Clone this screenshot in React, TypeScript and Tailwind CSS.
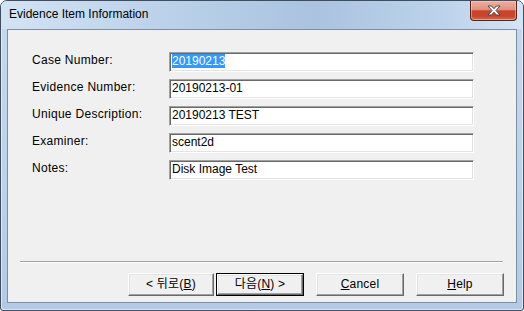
import React from "react";

const rows: { label: string; value: string; selected?: boolean }[] = [
  { label: "Case Number:", value: "20190213", selected: true },
  { label: "Evidence Number:", value: "20190213-01" },
  { label: "Unique Description:", value: "20190213 TEST" },
  { label: "Examiner:", value: "scent2d" },
  { label: "Notes:", value: "Disk Image Test" },
];

function Btn({
  children,
  width,
  isDefault,
}: {
  children: React.ReactNode;
  width: string;
  isDefault?: boolean;
}) {
  const inner = (
    <div className="h-full w-full flex items-center justify-center bg-[#f0f0f0] border border-t-white border-l-white border-r-[#696969] border-b-[#696969] shadow-[inset_-1px_-1px_0_#a0a0a0,inset_1px_1px_0_#e3e3e3] text-[12px] leading-[14px] tracking-[0.2px] text-black pb-[1px]">
      {children}
    </div>
  );
  return isDefault ? (
    <div className={`${width} h-[23px] border border-black`}>{inner}</div>
  ) : (
    <div className={`${width} h-[23px]`}>{inner}</div>
  );
}

export default function App() {
  return (
    <div className="w-[524px] h-[311px] flex flex-col overflow-hidden rounded-t-[7px] rounded-b-[3px] border border-[#3f4d5c] bg-[linear-gradient(to_bottom,#c4d9ef,#bad2eb_60%,#b2cae5)] shadow-[inset_0_0_0_1px_rgba(255,255,255,0.55)] font-['Liberation_Sans','Noto_Sans_CJK_KR',sans-serif]">
      {/* Title bar */}
      <div className="h-[28px] flex items-start bg-[linear-gradient(to_right,#d2e3f4_0%,#bcd2ea_30%,#aac3de_60%,#bdd3eb_85%,#d3e4f5_100%)]">
        <div className="flex-1 pl-[8px] pt-[6px] text-[12px] leading-[15px] text-black">
          Evidence Item Information
        </div>
        <div className="w-[47px] h-[20px] mr-[6px] rounded-b-[4px] border border-t-0 border-[#5e2218] bg-[linear-gradient(to_bottom,#eab0a2_0%,#df927f_45%,#c8452c_52%,#c9442a_80%,#d8704f_100%)] flex items-center justify-center shadow-[inset_0_0_0_1px_rgba(255,220,210,0.45)]">
          <svg width="14" height="11" viewBox="0 0 14 11">
            <polygon
              points="1,1 4.6,1 7,3.8 9.4,1 13,1 9,5.5 13,10 9.4,10 7,7.2 4.6,10 1,10 5,5.5"
              fill="#ffffff"
              stroke="#3d3d3d"
              strokeWidth="0.9"
              strokeLinejoin="round"
            />
          </svg>
        </div>
      </div>

      {/* Client area */}
      <div className="mx-[6px] mb-[7px] flex-1 flex flex-col border border-[#7d8ea2] bg-[#f0f0f0]">
        <div className="pt-[22px] flex flex-col gap-[7px]">
          {rows.map((r) => (
            <div key={r.label} className="flex items-start h-[20px]">
              <div className="w-[161px] pl-[24px] pt-[1px] text-[12px] leading-[14px] tracking-[0.3px] text-black">
                {r.label}
              </div>
              <div className="w-[305px] h-[20px] border border-t-[#a0a0a0] border-l-[#a0a0a0] border-r-white border-b-white bg-white shadow-[inset_1px_1px_0_#696969,inset_-1px_-1px_0_#e3e3e3] pl-[2px] pt-[1px] text-[12px] leading-[14px] text-black whitespace-nowrap">
                {r.selected ? (
                  <span className="bg-[#3399ff] text-white">{r.value}</span>
                ) : (
                  r.value
                )}
              </div>
            </div>
          ))}
        </div>

        <div className="flex-1" />

        <div className="ml-[12px] mr-[13px] h-[2px] border-t border-t-[#a0a0a0] border-b border-b-white" />

        <div className="mt-[10px] mb-[6px] pr-[12px] flex justify-end">
          <Btn width="w-[86px]">
            &lt; 뒤로(<span className="underline">B</span>)
          </Btn>
          <div className="ml-[2px]">
            <Btn width="w-[88px]" isDefault>
              다음(<span className="underline">N</span>) &gt;
            </Btn>
          </div>
          <div className="ml-[12px]">
            <Btn width="w-[88px]">
              <span className="underline">C</span>ancel
            </Btn>
          </div>
          <div className="ml-[12px]">
            <Btn width="w-[88px]">
              <span className="underline">H</span>elp
            </Btn>
          </div>
        </div>
      </div>
    </div>
  );
}
